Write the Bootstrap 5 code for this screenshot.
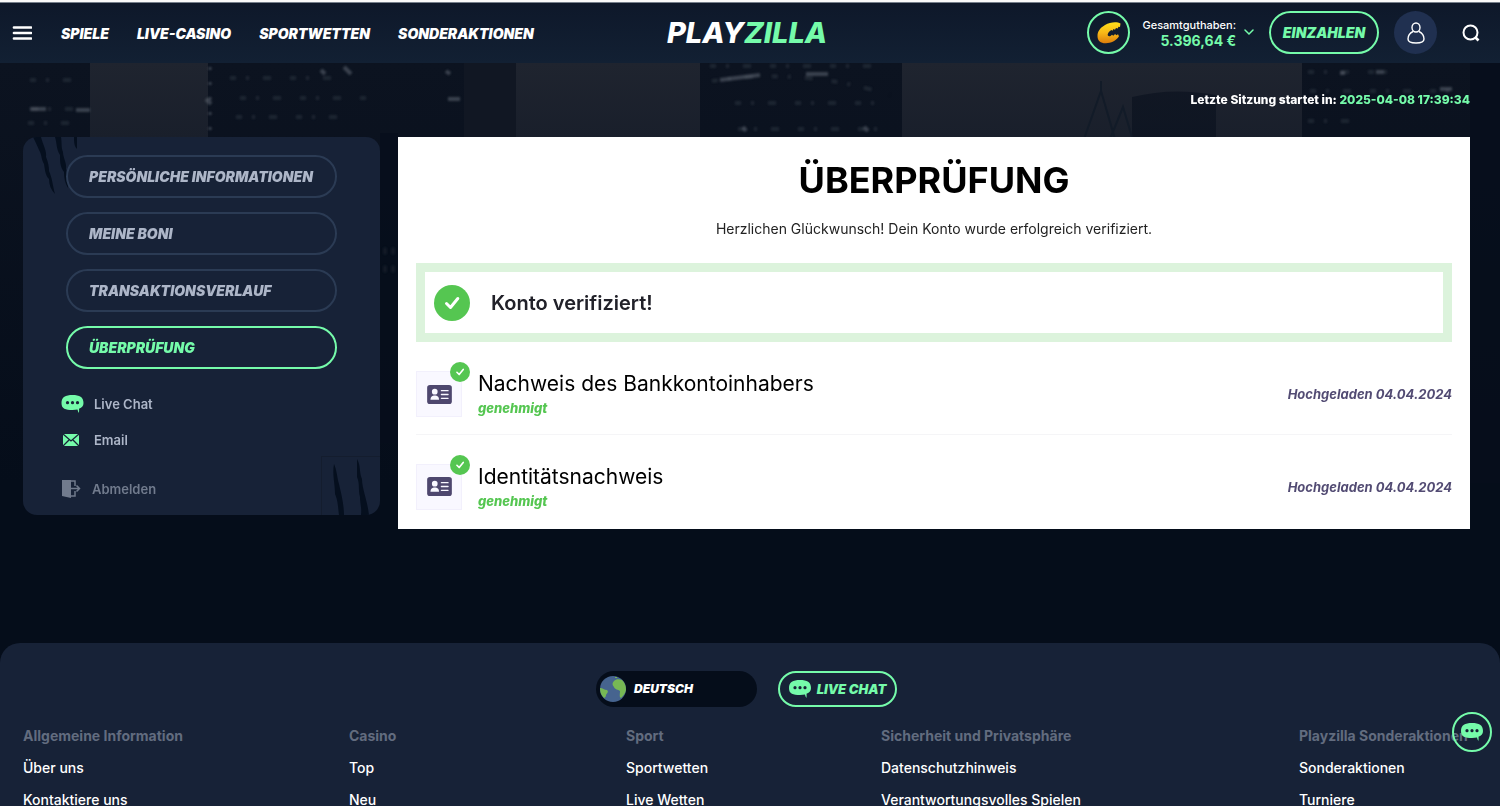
<!DOCTYPE html>
<html lang="de">
<head>
<meta charset="utf-8">
<meta name="viewport" content="width=device-width, initial-scale=1">
<title>Playzilla – Überprüfung</title>
<link href="https://cdn.jsdelivr.net/npm/bootstrap@5.3.0/dist/css/bootstrap.min.css" rel="stylesheet">
<style>
:root{--mint:#75fbaa;--panel:#172237;--night:#050d1a;--mute:#adb6c8;--dim:#626c7f;--ok:#55c651;--plum:#524b73}
html{scrollbar-width:none}
body{font-family:Inter,"Liberation Sans",sans-serif;background:var(--night);color:#fff;font-size:14px;line-height:20px;border-top:2px solid #fafafa}
a{text-decoration:none;color:inherit}
svg{display:block;flex:none}
.mint{color:var(--mint)}
.heavy{font-weight:900;font-style:italic}
.iconbtn{background:none;border:0;padding:0;color:inherit}
.ring{width:43px;height:43px;border:2px solid var(--mint);border-radius:50%}
.pill{border:2px solid #2b3b54;border-radius:24px;background:none;color:var(--mute)}
.pill-on{border-color:var(--mint);color:var(--mint)}

.topbar{height:61px;background:linear-gradient(#0e182a,#122033);border-top:1px solid #77808c;padding:0 20px 1px 12px}
.topnav{gap:28px;margin-left:29px;padding-top:2px}
.brand{font-size:29px;line-height:34px;font-weight:800;padding-right:6px}
.balance{line-height:16px;margin-left:12px}
.balance-label{font-size:11px;font-weight:500}
.balance-sum{font-size:14px;font-weight:700}
.chev{margin-left:8px}
.deposit{height:43px;width:110px;margin-left:15px;font-size:14px}
.avatar{width:43px;height:43px;margin-left:15px;border-radius:50%;background:#203050}
.search{margin-left:25px}

.scene{position:absolute;inset:0 0 auto 0;width:100%;height:420px;z-index:-1}
.stage{position:relative;z-index:0;padding:0 30px 0 23px;min-height:580px}
.session{padding:27px 0;font-size:12px;font-weight:800}
.sidepanel{position:relative;width:357px;height:378px;background:var(--panel);border-radius:14px;padding:18px 43px 0;overflow:hidden;flex:none}
.sidenav{gap:14px;margin-bottom:17px}
.sidepanel .pill{height:43px;padding:0 21px}
.claw-a{position:absolute;left:0;top:0}
.claw-b{position:absolute;right:0;bottom:0}
.help{font-size:13px;font-weight:600;color:var(--mute);margin-left:-5px}
.help a{gap:10px;height:36px}
.help .leave{color:#717b8d;margin-top:13px;gap:11px}

.verify{background:#fff;color:#000;padding:20px 18px 0;height:392px;margin-left:18px}
.verify h1{font-size:36px;line-height:46px;font-weight:700}
.verify .intro{margin:16px 0 24px;color:#222}
.okbox{border:9px solid #dcf3dc;height:79px;padding:0 9px;gap:21px;font-size:20px;font-weight:600;color:#212129}
.docrow{height:92px;padding-top:12px}
.docrow + .docrow{border-top:1px solid #f5f5f7}
.tile{position:relative;width:46px;height:46px;background:#f9f8ff;border:1px solid #f2f0fc;margin-right:16px}
.tile .tick{position:absolute;right:-9px;top:-10px}
.doctitle{font-size:21px;line-height:28px}
.okay{color:var(--ok);font-size:13px;font-weight:800;line-height:20px}
.sent{color:var(--plum);font-size:13px;font-weight:700}

.foot{background:var(--panel);border-radius:20px 20px 0 0;padding:28px 30px 0 23px}
.footbtns{gap:21px}
.lang{width:161px;height:36px;border-radius:18px;background:var(--night);border:0;color:#fff;padding:0 4px;gap:8px;font-size:12px}
.chatpill{height:36px;width:119px;font-size:13px;gap:6px}
.cols{display:grid;grid-template-columns:326fr 277fr 255fr 418fr 171fr;margin-top:19px;white-space:nowrap;height:80px}
.cols h2{font-size:14px;line-height:20px;font-weight:700;color:var(--dim);margin:0 0 12px}
.cols a{display:block;line-height:20px;margin-bottom:12px;font-weight:500}
.floatchat{position:fixed;right:8px;top:712px;width:40px;height:40px}
</style>
</head>
<body>
<svg width="0" height="0" class="position-absolute" aria-hidden="true">
 <symbol id="bubble" viewBox="0 0 22 18"><path d="M11 0C4 0 0 2 0 8s4 7 11 7c2 0 3.500-.1 5-.4.3 1.500.7 2.600 1.400 3.400.3-1.500.3-3 .1-4.200C20.600 12.700 22 11 22 8c0-6-4-8-11-8z" fill="#75fbaa"/><g fill="#172237"><circle cx="6" cy="7.700" r="1.600"/><circle cx="11" cy="7.700" r="1.600"/><circle cx="16" cy="7.700" r="1.600"/></g></symbol>
 <symbol id="tick" viewBox="0 0 36 36"><circle cx="18" cy="18" r="18" fill="#55c651"/><path d="M12.500 18.500l4 4 7.300-9" fill="none" stroke="#fff" stroke-width="3" stroke-linecap="round" stroke-linejoin="round"/></symbol>
 <symbol id="idcard" viewBox="0 0 26 20"><rect width="26" height="20" rx="3" fill="#4e476e"/><circle cx="8" cy="7" r="3" fill="#f9f8ff"/><path d="M3.500 15.500c0-3.500 2-4.500 4.500-4.500s4.500 1 4.500 4.500z" fill="#f9f8ff"/><path d="M15 6h7M15 10h7M15 14h7" stroke="#f9f8ff" stroke-width="1.400" stroke-linecap="round"/></symbol>
</svg>

<header class="topbar d-flex align-items-center position-relative">
 <button class="iconbtn" aria-label="Menü"><svg width="20" height="16" viewBox="0 0 20 16"><path d="M2 2.500h17M2 8h17M2 13.500h17" stroke="#fff" stroke-width="2.700" stroke-linecap="round"/></svg></button>
 <nav class="topnav d-flex heavy"><a href="#">SPIELE</a><a href="#">LIVE-CASINO</a><a href="#">SPORTWETTEN</a><a href="#">SONDERAKTIONEN</a></nav>
 <a href="#" class="brand fst-italic position-absolute start-50 translate-middle-x">PLAY<span class="mint">ZILLA</span></a>
 <div class="d-flex align-items-center ms-auto">
  <button class="iconbtn ring d-flex align-items-center justify-content-center" aria-label="Bonus">
   <svg width="26" height="24" viewBox="0 0 26 24"><defs><linearGradient id="gold" x2="0" y2="1"><stop stop-color="#ffe01a"/><stop offset=".5" stop-color="#f8b817"/><stop offset="1" stop-color="#dc7d0c"/></linearGradient></defs><path d="M24.500 2.500C21 .5 14 1 9 4 4 7 1.500 10.500 1.500 15c0 5 3.500 7.500 8.500 7.300 5-.2 10-2.300 13-7l-1-2-1.700 1-1.200-1.200-1.800 1.600-1.300-1-1.500 1.300c-2 .8-3.500-.5-2.500-2.500.8-1.700 2.500-3 3.500-3.500l1 .8 1-1.800 1.500.8 1-1.800 1.700.5.800-1.700 1.500.2z" fill="url(#gold)"/></svg>
  </button>
  <button class="iconbtn balance d-flex align-items-center text-end">
   <span><span class="d-block balance-label">Gesamtguthaben:</span><span class="d-block mint balance-sum">5.396,64 €</span></span>
   <svg width="10" height="7" viewBox="0 0 10 7" class="chev"><path d="M1 1l4 4 4-4" fill="none" stroke="#75fbaa" stroke-width="1.500" stroke-linecap="round"/></svg>
  </button>
  <button class="pill pill-on deposit heavy p-0">EINZAHLEN</button>
  <button class="iconbtn avatar d-flex align-items-center justify-content-center" aria-label="Profil"><svg width="18" height="22" viewBox="0 0 18 22" fill="none" stroke="#fff" stroke-width="1.400"><ellipse cx="9" cy="5.500" rx="4" ry="4.500"/><path d="M6 9.500C3 11 1 13.500 1 17c0 3 3 4 8 4s8-1 8-4c0-3.500-2-6-5-7.500"/></svg></button>
  <button class="iconbtn search" aria-label="Suche"><svg width="18" height="18" viewBox="0 0 18 18" fill="none" stroke="#fff" stroke-width="2"><circle cx="8.500" cy="8.500" r="7"/><path d="M13.500 13.500l3 3" stroke-width="2.600"/></svg></button>
 </div>
</header>

<main class="stage">
 <svg class="scene" viewBox="0 0 1500 420" preserveAspectRatio="none" aria-hidden="true">
  <defs>
   <linearGradient id="sky" x2="0" y2="1"><stop stop-color="#1f242f"/><stop offset=".18" stop-color="#191f2b"/><stop offset="1" stop-color="#050d1a"/></linearGradient>
   <linearGradient id="tower" x2="0" y2="1"><stop stop-color="#0c1320"/><stop offset="1" stop-color="#050d1a"/></linearGradient>
   <filter id="soft"><feGaussianBlur stdDeviation="1.300"/></filter>
  </defs>
  <rect width="1500" height="420" fill="url(#sky)"/>
  <g fill="url(#tower)"><path d="M0 0h90v420H0zM208 0h308v420H208zM700 0h202v420H700zM1302 0h198v420h-198z"/><path d="M1132 34q40-10 84-2v388h-84z" fill-opacity=".75"/><path d="M464 0h52v420h-52z" fill="#151b27" fill-opacity=".6"/><path d="M380 380V70h18v310zM1470 0h30v420h-30z" fill="#060e1b" fill-opacity=".8"/></g>
  <path d="M1084 76l17-48 14 48M1110 76l13-32 9 30M1101 28v-10" fill="none" stroke="#121b28" stroke-width="2"/>
  <g stroke="#69717e" fill="none" filter="url(#soft)">
   <g stroke-dasharray="6 10 3 14 8 19" stroke-width="4" opacity=".2"><path d="M30 17h50M32 46h60M28 60h55M230 15h120M240 35h130M236 54h120M712 18q90-14 178 14M735 40h150M738 66h150M1308 9h90M1310 28h150M1308 58h60M710 3h180"/></g>
   <path d="M210 4v70" stroke-dasharray="3 12" stroke-width="3" opacity=".5"/>
   <path d="M344 4l7 7M321 7l4 4M206 36l5 5M76 47h14M30 46h16M448 36h12M446 8l4 3M743 64l3 4M864 64l4 4M720 17l40-5M806 11h22M1440 26h12M1340 10h5M1376 9h8" stroke-width="4" opacity=".5"/>
   <path d="M383 188h12M383 206h12" stroke-width="7" stroke-dasharray="4 4" opacity=".12"/>
  </g>
 </svg>
 <p class="session text-end mb-0">Letzte Sitzung startet in: <span class="mint">2025-04-08 17:39:34</span></p>
 <div class="d-flex align-items-start">
  <aside class="sidepanel">
   <svg class="claw-a" width="58" height="58" viewBox="0 0 58 58"><path d="M10 0h8c2 8 6 14 5 20 2 5 3 9 3 14 3 6 4 16 6 23-4-4-6-9-6-15-4-4-4-10-5-15-3-5-2-9-5-14-2-5-4-9-6-13zM32 0h6c1 6 0 10 2 15 0 6 4 11 3 17 2 6 2 12 2 19-3-5-4-10-4-16-4-5-4-11-4-17-4-6-3-12-5-18zM51 0h3v12c-3-3-3-8-3-12z" fill="#050f1e"/></svg>
   <svg class="claw-b" width="59" height="59" viewBox="0 0 59 59"><path d="M0 59V0h59" fill="none" stroke="#141d2e" stroke-width="2"/><path d="M13 8c3 7 3 13 5 20 2 9 5 20 5 31h-5c-1-8-1-14-4-21 0-10-3-20-1-30zM36 3c4 7 2 13 5 20 0 10 5 20 7 36h-8c1-7-1-11-1-18-2-8 0-13-3-20z" fill="#050f1e"/></svg>
   <div class="position-relative">
    <nav class="d-grid sidenav">
     <a href="#" class="pill heavy d-flex align-items-center">PERSÖNLICHE INFORMATIONEN</a>
     <a href="#" class="pill heavy d-flex align-items-center">MEINE BONI</a>
     <a href="#" class="pill heavy d-flex align-items-center">TRANSAKTIONSVERLAUF</a>
     <a href="#" class="pill pill-on heavy d-flex align-items-center">ÜBERPRÜFUNG</a>
    </nav>
    <div class="help d-grid">
     <a href="#" class="d-flex align-items-center"><svg width="23" height="18"><use href="#bubble"/></svg>Live Chat</a>
     <a href="#" class="d-flex align-items-center"><svg width="23" height="14" viewBox="0 0 23 14"><path d="M2 1h16v12H2z" fill="#75fbaa"/><path d="M2 1l8 7 8-7M2 13l6-6M18 13l-6-6" fill="none" stroke="#172237" stroke-width="1.300"/></svg>Email</a>
     <a href="#" class="leave d-flex align-items-center"><svg width="20" height="20" viewBox="0 0 20 20"><path d="M1 1h9v18l-9-2z" fill="currentColor"/><path d="M9 2h5v5M14 12v5H9M10 9.500h8M15.500 6.500l3 3-3 3" fill="none" stroke="currentColor" stroke-width="1.500"/></svg>Abmelden</a>
    </div>
   </div>
  </aside>
  <section class="verify flex-grow-1">
   <h1 class="text-center mb-0">ÜBERPRÜFUNG</h1>
   <p class="intro text-center">Herzlichen Glückwunsch! Dein Konto wurde erfolgreich verifiziert.</p>
   <div class="okbox d-flex align-items-center"><svg width="36" height="36"><use href="#tick"/></svg>Konto verifiziert!</div>
   <div class="docrow d-flex align-items-center">
    <div class="tile d-flex align-items-center justify-content-center"><svg width="25" height="19"><use href="#idcard"/></svg><svg class="tick" width="20" height="20"><use href="#tick"/></svg></div>
    <div><div class="doctitle">Nachweis des Bankkontoinhabers</div><div class="okay fst-italic">genehmigt</div></div>
    <div class="sent fst-italic ms-auto">Hochgeladen 04.04.2024</div>
   </div>
   <div class="docrow d-flex align-items-center">
    <div class="tile d-flex align-items-center justify-content-center"><svg width="25" height="19"><use href="#idcard"/></svg><svg class="tick" width="20" height="20"><use href="#tick"/></svg></div>
    <div><div class="doctitle">Identitätsnachweis</div><div class="okay fst-italic">genehmigt</div></div>
    <div class="sent fst-italic ms-auto">Hochgeladen 04.04.2024</div>
   </div>
  </section>
 </div>
</main>

<footer class="foot">
 <div class="d-flex justify-content-center footbtns">
  <button class="lang d-flex align-items-center heavy"><svg width="26" height="26" viewBox="0 0 26 26"><circle cx="13" cy="13" r="13" fill="#46648f"/><path d="M15 1h2v1h-2zM14 5c2-2 5-2 8-1 3 3 4 6 4 10-1 4-3 6-5 8-2-1-1-4-1-7-2-2-5-1-6-4-2-2-2-4 0-6zM0 12c3 0 4 2 7 2 2 2 0 3-1 5 0 2-1 2-2 3-3-3-4-6-4-10z" fill="#77b854"/></svg>DEUTSCH</button>
  <button class="pill pill-on chatpill d-flex align-items-center justify-content-center heavy p-0"><svg width="22" height="18"><use href="#bubble"/></svg>LIVE CHAT</button>
 </div>
 <div class="cols">
  <div><h2>Allgemeine Information</h2><a href="#">Über uns</a><a href="#">Kontaktiere uns</a></div>
  <div><h2>Casino</h2><a href="#">Top</a><a href="#">Neu</a></div>
  <div><h2>Sport</h2><a href="#">Sportwetten</a><a href="#">Live Wetten</a></div>
  <div><h2>Sicherheit und Privatsphäre</h2><a href="#">Datenschutzhinweis</a><a href="#">Verantwortungsvolles Spielen</a></div>
  <div><h2>Playzilla Sonderaktionen</h2><a href="#">Sonderaktionen</a><a href="#">Turniere</a></div>
 </div>
</footer>
<button class="iconbtn ring floatchat d-flex align-items-center justify-content-center" aria-label="Live Chat"><svg width="22" height="18"><use href="#bubble"/></svg></button>
<script src="https://cdn.jsdelivr.net/npm/bootstrap@5.3.0/dist/js/bootstrap.bundle.min.js"></script>
</body>
</html>
